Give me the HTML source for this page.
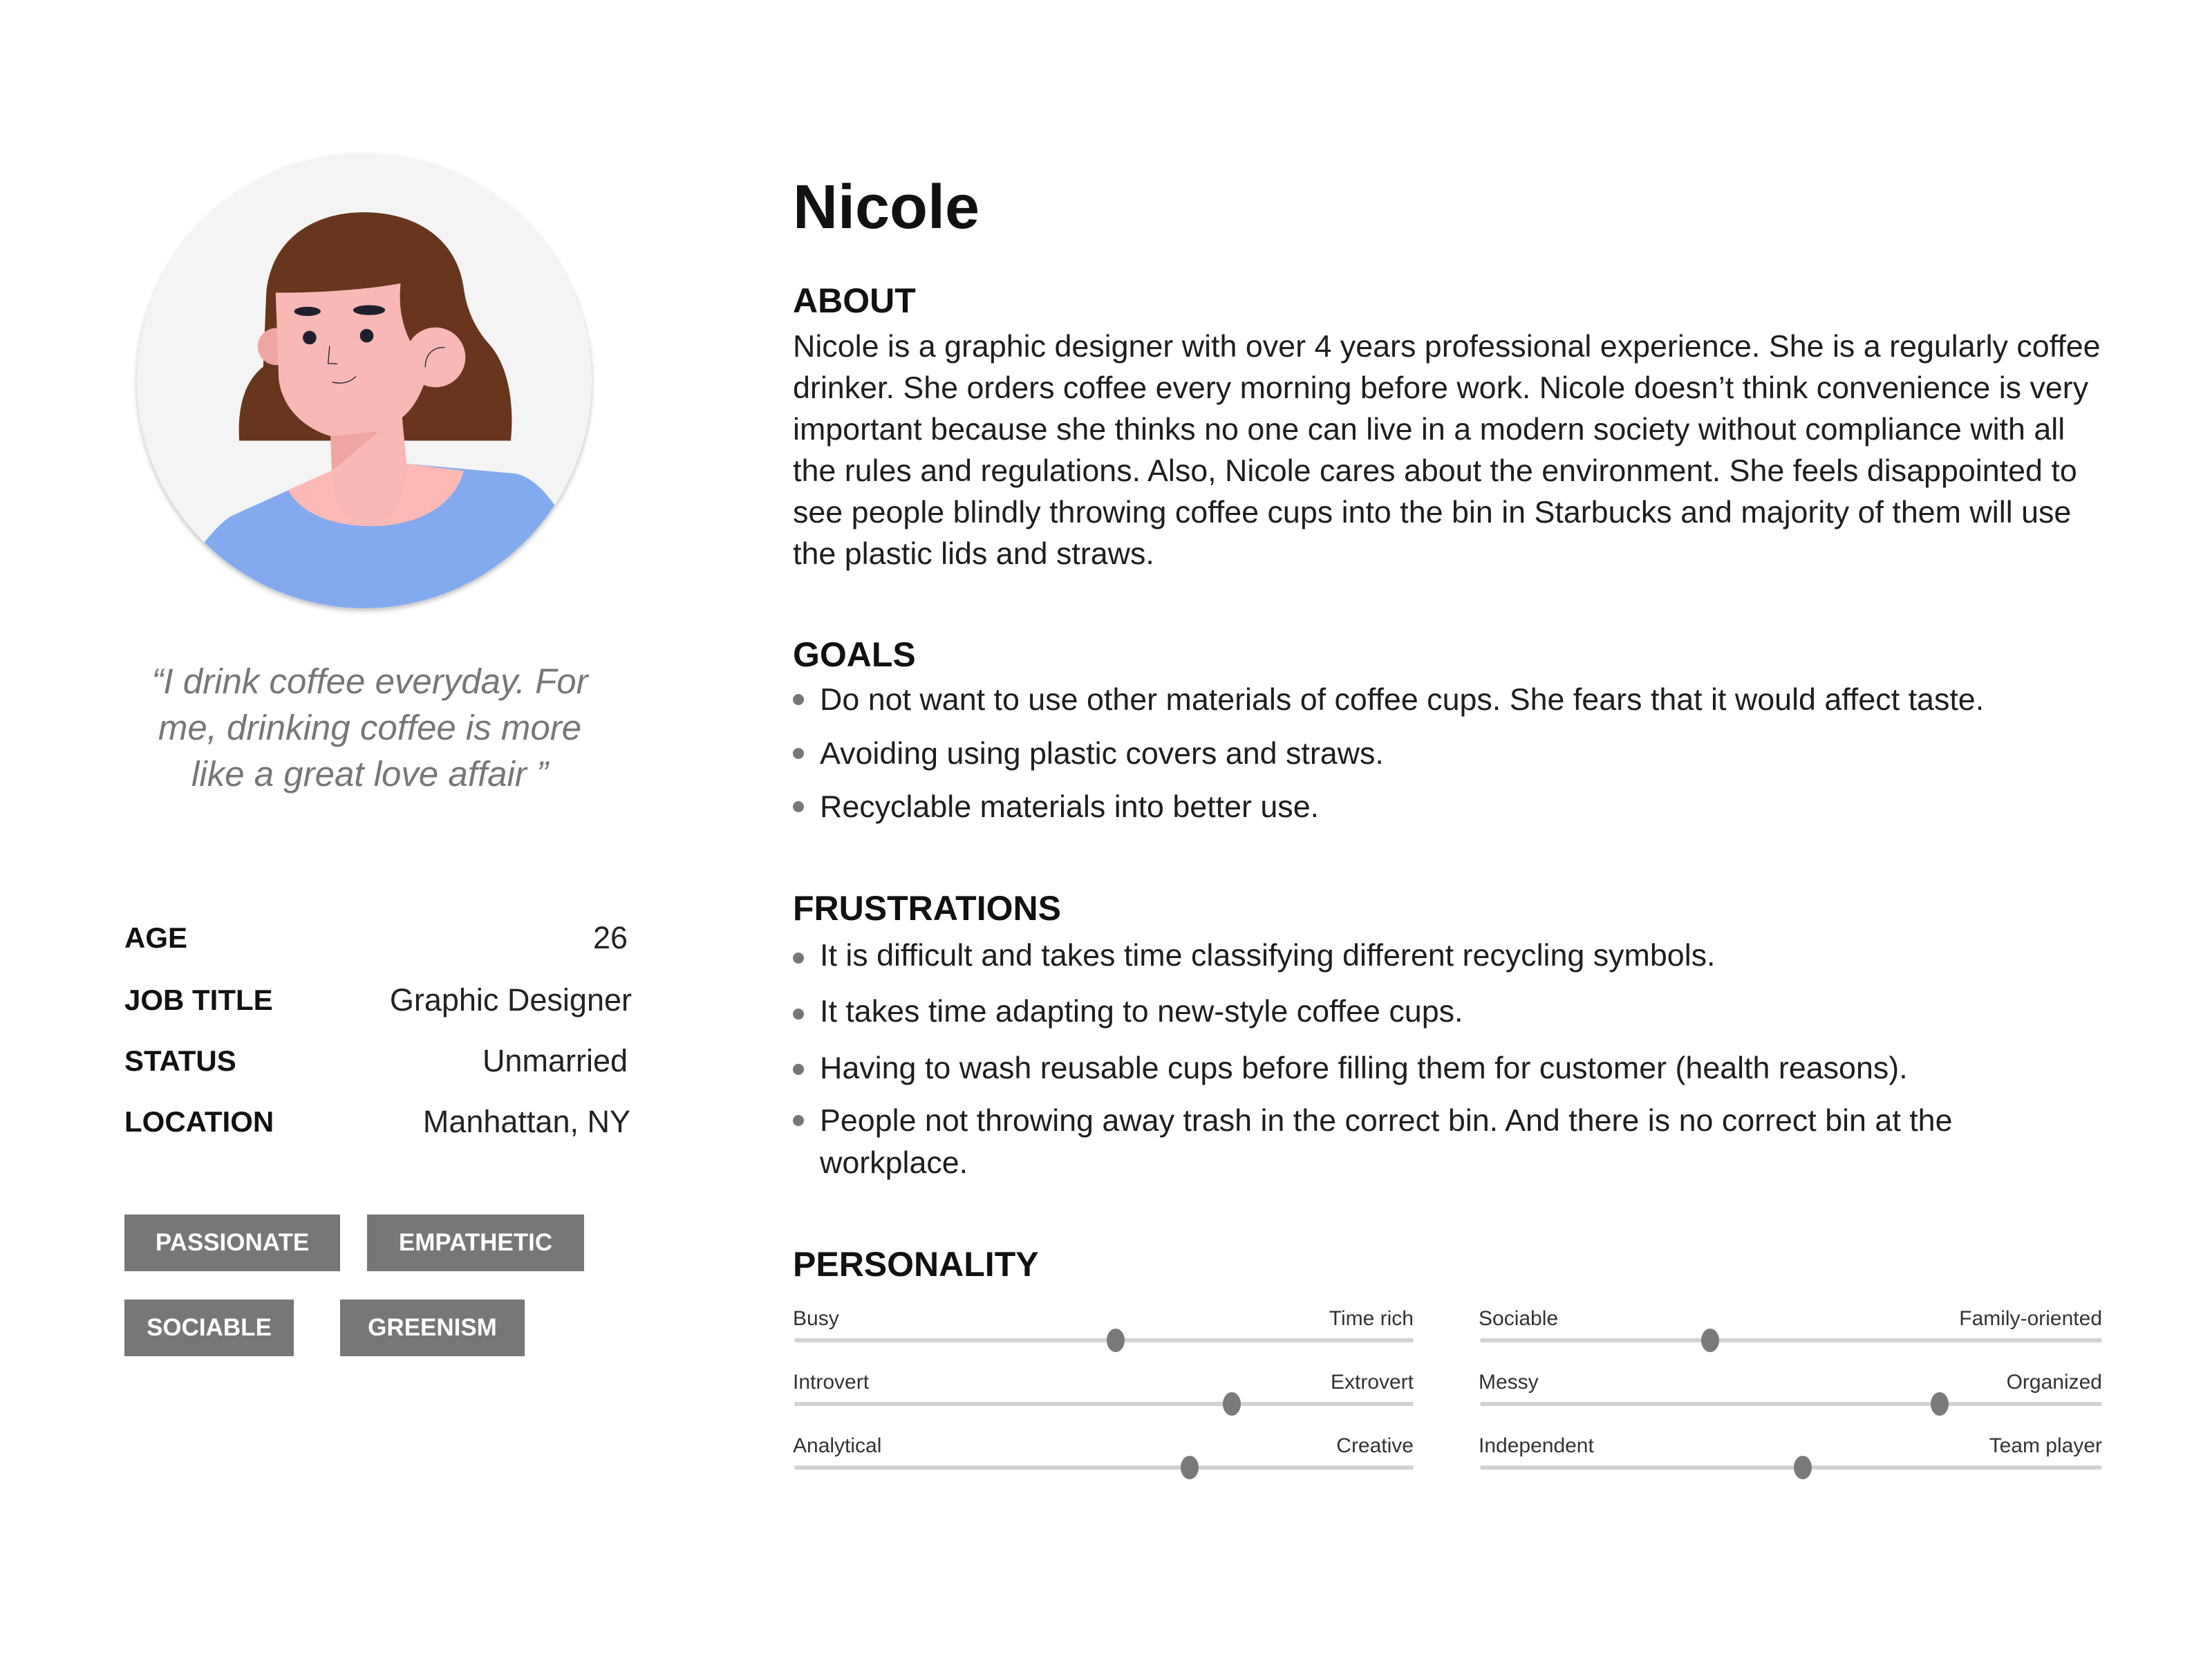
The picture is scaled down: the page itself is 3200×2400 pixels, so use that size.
<!DOCTYPE html>
<html><head><meta charset="utf-8"><style>
*{margin:0;padding:0;box-sizing:border-box}
body{width:3200px;height:2400px;background:#fff;position:relative;overflow:hidden;font-family:"Liberation Sans",sans-serif;color:#1a1a1a}
.a{position:absolute;white-space:nowrap}
.h{font-weight:bold;font-size:50px;line-height:60px;color:#111}
.p{font-size:44.8px;line-height:60px;color:#1e1e1e}
.lab{font-weight:bold;font-size:42px;line-height:60px;color:#111}
.val{font-size:45px;line-height:60px;color:#222;text-align:right;width:500px}
.q{font-style:italic;font-size:51px;line-height:68px;color:#777;text-align:center;width:760px;left:155px}
.tag{position:absolute;background:#777;color:#fff;font-weight:bold;font-size:35px;display:flex;align-items:center;justify-content:center;height:82px}
.dot{position:absolute;width:16px;height:16px;border-radius:50%;background:#777}
.sl{font-size:30px;line-height:40px;color:#333}
.tr{position:absolute;height:6px;background:#d2d2d2;border-radius:3px}
.kn{position:absolute;width:26px;height:34px;border-radius:50%;background:#7a7a7a}
</style></head><body>

<svg class="a" style="left:180px;top:200px" width="700" height="700" viewBox="0 0 1568 1568">
<defs><clipPath id="c"><circle cx="777" cy="786" r="737"/></clipPath>
<filter id="s" x="-10%" y="-10%" width="120%" height="120%"><feDropShadow dx="0" dy="8" stdDeviation="8" flood-color="#000" flood-opacity="0.25"/></filter></defs>
<circle cx="777" cy="786" r="737" fill="#f4f4f4" filter="url(#s)"/>
<g clip-path="url(#c)">
<path d="M372,980 C365,850 400,780 450,740 L460,495 C480,320 620,240 775,240 C950,240 1080,330 1100,490 C1110,560 1140,620 1180,665 C1240,730 1265,850 1252,980 Z" fill="#67361d"/>
<circle cx="492" cy="675" r="60" fill="#efa6a3"/>
<path d="M258,1310 C300,1260 330,1230 360,1218 L670,1078 L915,1055 L1270,1087 C1320,1100 1360,1140 1395,1190 L1600,1600 L150,1600 Z" fill="#83aaee"/>
<path d="M530,1140 C580,1230 700,1257 800,1257 C950,1257 1070,1190 1100,1078 L915,1055 L670,1078 Z" fill="#fdb9b6"/>
<path d="M490,500 C600,502 780,492 895,470 C888,540 898,600 925,655 L970,800 C950,850 930,880 900,905 L915,1060 C900,1180 880,1240 800,1250 C700,1245 680,1180 672,1078 L668,965 C580,940 510,870 500,780 Z" fill="#f8b9b6"/>
<polygon points="668,965 825,950 672,1078" fill="#efa6a3"/>
<circle cx="1008" cy="710" r="97" fill="#f8b9b6"/>
<ellipse cx="593" cy="561" rx="43" ry="15" fill="#201f2e"/>
<ellipse cx="793" cy="557" rx="52" ry="16" fill="#201f2e"/>
<circle cx="600" cy="646" r="22" fill="#201f2e"/>
<circle cx="785" cy="640" r="22" fill="#201f2e"/>
<path d="M665,673 L660,730 L690,731" fill="none" stroke="#201f2e" stroke-width="3"/>
<path d="M673,790 C700,798 730,792 750,772" fill="none" stroke="#201f2e" stroke-width="3"/>
<path d="M1038,678 C1000,676 975,700 975,742" fill="none" stroke="#201f2e" stroke-width="3"/>
</g>
</svg>

<div class="a q" style="top:952px">“I drink coffee everyday. For</div>
<div class="a q" style="top:1019px">me, drinking coffee is more</div>
<div class="a q" style="top:1086px">like a great love affair ”</div>

<div class="a lab" style="left:180px;top:1327px">AGE</div><div class="a val" style="left:408px;top:1327px">26</div>
<div class="a lab" style="left:180px;top:1417px">JOB TITLE</div><div class="a val" style="left:414px;top:1417px">Graphic Designer</div>
<div class="a lab" style="left:180px;top:1505px">STATUS</div><div class="a val" style="left:408px;top:1505px">Unmarried</div>
<div class="a lab" style="left:180px;top:1593px">LOCATION</div><div class="a val" style="left:412px;top:1593px">Manhattan, NY</div>

<div class="tag" style="left:180px;top:1757px;width:312px">PASSIONATE</div>
<div class="tag" style="left:531px;top:1757px;width:314px">EMPATHETIC</div>
<div class="tag" style="left:180px;top:1880px;width:245px">SOCIABLE</div>
<div class="tag" style="left:492px;top:1880px;width:267px">GREENISM</div>

<div class="a" style="left:1147px;top:245px;font-size:90px;font-weight:bold;line-height:110px;color:#111">Nicole</div>

<div class="a h" style="left:1147px;top:405px">ABOUT</div>
<div class="a p" style="left:1147px;top:471px">Nicole is a graphic designer with over 4 years professional experience. She is a regularly coffee</div>
<div class="a p" style="left:1147px;top:531px">drinker. She orders coffee every morning before work. Nicole doesn’t think convenience is very</div>
<div class="a p" style="left:1147px;top:591px">important because she thinks no one can live in a modern society without compliance with all</div>
<div class="a p" style="left:1147px;top:651px">the rules and regulations. Also, Nicole cares about the environment. She feels disappointed to</div>
<div class="a p" style="left:1147px;top:711px">see people blindly throwing coffee cups into the bin in Starbucks and majority of them will use</div>
<div class="a p" style="left:1147px;top:771px">the plastic lids and straws.</div>

<div class="a h" style="left:1147px;top:917px">GOALS</div>
<div class="dot" style="left:1147px;top:1004px"></div><div class="a p" style="left:1186px;top:982px">Do not want to use other materials of coffee cups. She fears that it would affect taste.</div>
<div class="dot" style="left:1147px;top:1082px"></div><div class="a p" style="left:1186px;top:1060px">Avoiding using plastic covers and straws.</div>
<div class="dot" style="left:1147px;top:1159px"></div><div class="a p" style="left:1186px;top:1137px">Recyclable materials into better use.</div>

<div class="a h" style="left:1147px;top:1284px">FRUSTRATIONS</div>
<div class="dot" style="left:1147px;top:1378px"></div><div class="a p" style="left:1186px;top:1352px">It is difficult and takes time classifying different recycling symbols.</div>
<div class="dot" style="left:1147px;top:1459px"></div><div class="a p" style="left:1186px;top:1433px">It takes time adapting to new-style coffee cups.</div>
<div class="dot" style="left:1147px;top:1539px"></div><div class="a p" style="left:1186px;top:1515px">Having to wash reusable cups before filling them for customer (health reasons).</div>
<div class="dot" style="left:1147px;top:1613px"></div><div class="a p" style="left:1186px;top:1591px">People not throwing away trash in the correct bin. And there is no correct bin at the</div>
<div class="a p" style="left:1186px;top:1652px">workplace.</div>

<div class="a h" style="left:1147px;top:1799px">PERSONALITY</div>

<div class="a sl" style="left:1147px;top:1888px">Busy</div><div class="a sl" style="right:1155px;top:1888px">Time rich</div>
<div class="tr" style="left:1149px;top:1936px;width:896px"></div><div class="kn" style="left:1601px;top:1922px"></div>
<div class="a sl" style="left:1147px;top:1980px">Introvert</div><div class="a sl" style="right:1155px;top:1980px">Extrovert</div>
<div class="tr" style="left:1149px;top:2028px;width:896px"></div><div class="kn" style="left:1769px;top:2014px"></div>
<div class="a sl" style="left:1147px;top:2072px">Analytical</div><div class="a sl" style="right:1155px;top:2072px">Creative</div>
<div class="tr" style="left:1149px;top:2120px;width:896px"></div><div class="kn" style="left:1708px;top:2106px"></div>

<div class="a sl" style="left:2139px;top:1888px">Sociable</div><div class="a sl" style="right:159px;top:1888px">Family-oriented</div>
<div class="tr" style="left:2141px;top:1936px;width:900px"></div><div class="kn" style="left:2461px;top:1922px"></div>
<div class="a sl" style="left:2139px;top:1980px">Messy</div><div class="a sl" style="right:159px;top:1980px">Organized</div>
<div class="tr" style="left:2141px;top:2028px;width:900px"></div><div class="kn" style="left:2793px;top:2014px"></div>
<div class="a sl" style="left:2139px;top:2072px">Independent</div><div class="a sl" style="right:159px;top:2072px">Team player</div>
<div class="tr" style="left:2141px;top:2120px;width:900px"></div><div class="kn" style="left:2595px;top:2106px"></div>

</body></html>
